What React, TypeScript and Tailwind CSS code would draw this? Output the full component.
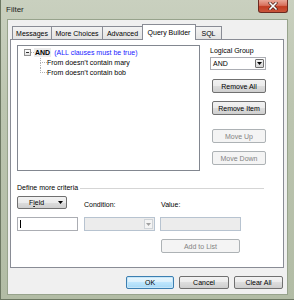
import React from 'react';

const btn =
  'flex items-center justify-center rounded-[2px] border border-[#707070] bg-[linear-gradient(#f2f2f2_0%,#ebebeb_50%,#dddddd_50%,#cfcfcf_100%)] text-[7px] leading-none text-black';
const btnOff =
  'flex items-center justify-center rounded-[2px] border border-[#adb2b5] bg-[#f4f4f4] text-[7px] leading-none text-[#838383]';

const TABS = [
  { label: 'Messages', w: 'w-[39px]' },
  { label: 'More Choices', w: 'w-[51px]' },
  { label: 'Advanced', w: 'w-[40px]' },
];

function CloseButton() {
  return (
    <div className="ml-auto mr-[6px] flex h-[13px] w-[30px] items-center justify-center rounded-b-[3px] border border-t-0 border-[#6b2a20] bg-[linear-gradient(#e9a797_0%,#d8705c_45%,#c23c22_55%,#c9553a_100%)]">
      <svg width="10" height="8" viewBox="0 0 10 8">
        <path d="M2 1 L8 7 M8 1 L2 7" stroke="#4a2018" strokeWidth="3" strokeLinecap="square" />
        <path d="M2 1 L8 7 M8 1 L2 7" stroke="#ffffff" strokeWidth="1.6" strokeLinecap="square" />
      </svg>
    </div>
  );
}

function DownArrow({ color = '#000' }: { color?: string }) {
  return (
    <svg width="5" height="3" viewBox="0 0 5 3">
      <path d="M0 0 L5 0 L2.5 3 Z" fill={color} />
    </svg>
  );
}

function Tree() {
  return (
    <div className="h-[126px] w-[183px] border border-[#828790] bg-white pt-[1px] text-[7px]">
      <div className="flex h-[11px] items-center pl-[6px]">
        <div className="flex h-[7px] w-[7px] items-center justify-center border border-[#919191] bg-[linear-gradient(#ffffff,#e3e3e3)]">
          <div className="h-px w-[3px] bg-[#333]" />
        </div>
        <div className="w-[3px] border-t border-dotted border-[#b0b0b0]" />
        <span className="bg-[#ececec] px-px font-bold leading-[9px]">AND</span>
        <span className="ml-[3px] leading-[9px] text-[#1a1aff]">(ALL clauses must be true)</span>
      </div>
      {['From doesn\u2019t contain mary', 'From doesn\u2019t contain bob'].map((t, i) => (
        <div key={t} className="flex h-[10px] pl-[22px]">
          <div className="flex w-[7px] flex-col">
            <div className="h-1/2 border-b border-l border-dotted border-[#b0b0b0]" />
            <div className={i === 0 ? 'h-1/2 border-l border-dotted border-[#b0b0b0]' : 'h-1/2'} />
          </div>
          <span className="leading-[10px]">{t}</span>
        </div>
      ))}
    </div>
  );
}

export default function App() {
  return (
    <div className="flex h-[300px] w-[294px] flex-col overflow-hidden border-b border-l border-[#6d7863] bg-[linear-gradient(180deg,#c9d0bf_0%,#bcc5b0_35%,#b2bca5_100%)] font-['Liberation_Sans',Arial,sans-serif] text-black">
      <div className="flex h-[19px] shrink-0">
        <span className="pl-[5px] pt-[6px] text-[8px] leading-[8px] text-[#1e1e1e]">Filter</span>
        <CloseButton />
      </div>

      <div className="ml-[6px] mr-[6px] flex h-[276px] flex-col border border-[#97a38c] bg-[#f0f0f0]">
        <div className="mt-[4px] flex h-[15px] items-end pl-[4px]">
          {TABS.map((t) => (
            <div
              key={t.label}
              className={`${t.w} flex h-[13px] items-center justify-center border-l border-t border-[#898c95] bg-[linear-gradient(#f3f3f3,#e3e3e3)] text-[7px] leading-none`}
            >
              {t.label}
            </div>
          ))}
          <div className="relative z-10 mb-[-1px] flex h-[16px] w-[54px] items-center justify-center border border-b-0 border-[#898c95] bg-white pb-[1px] text-[7px] leading-none">
            Query Builder
          </div>
          <div className="flex h-[13px] w-[26px] items-center justify-center border-r border-t border-[#898c95] bg-[linear-gradient(#f3f3f3,#e3e3e3)] text-[7px] leading-none">
            SQL
          </div>
        </div>

        <div className="ml-[2px] flex h-[229px] w-[274px] flex-col border border-[#898c95] bg-white">
          <div className="flex pl-[6px] pt-[5px]">
            <Tree />
            <div className="ml-[10px] flex w-[56px] flex-col">
              <span className="mt-[1px] h-[9px] text-[7px] leading-[9px]">Logical Group</span>
              <div className="mt-[2px] flex h-[13px] items-center border border-[#abadb3] bg-white">
                <span className="flex-1 pl-[2px] text-[7px] leading-none">AND</span>
                <div className="mr-px flex h-[9px] w-[9px] items-center justify-center rounded-[1px] border border-[#707070] bg-[linear-gradient(#f2f2f2,#d6d6d6)]">
                  <DownArrow />
                </div>
              </div>
              <div className={`${btn} ml-[2px] mt-[9px] h-[14px] w-[54px]`}>Remove All</div>
              <div className={`${btn} ml-[2px] mt-[8px] h-[14px] w-[54px]`}>Remove Item</div>
              <div className={`${btnOff} ml-[2px] mt-[14px] h-[14px] w-[54px]`}>Move Up</div>
              <div className={`${btnOff} ml-[2px] mt-[8px] h-[14px] w-[54px]`}>Move Down</div>
            </div>
          </div>

          <div className="ml-[6px] mt-[13px] flex h-[8px] items-center">
            <span className="text-[7px] leading-[8px]">Define more criteria</span>
            <div className="ml-[2px] mr-[19px] flex-1 border-t border-[#d5d5d5]" />
          </div>

          <div className="ml-[6px] mt-[4px] grid grid-cols-[62px_71px_81px] gap-x-[5px]">
            <div className="flex h-[13px] w-[50px] items-center rounded-[2px] border border-[#707070] bg-[linear-gradient(#f2f2f2_0%,#ebebeb_50%,#dddddd_50%,#cfcfcf_100%)] pl-[11px] pr-[3px] text-[7px] leading-none">
              <span>
                F<span className="underline">i</span>eld
              </span>
              <div className="ml-auto flex">
                <DownArrow />
              </div>
            </div>
            <span className="h-[9px] self-end text-[7px] leading-[9px]">Condition:</span>
            <span className="h-[9px] self-end pl-px text-[7px] leading-[9px]">Value:</span>

            <div className="mt-[8px] flex h-[14px] w-[61px] items-center border border-[#abadb3] bg-white pl-[2px]">
              <div className="h-[8px] w-px bg-black" />
            </div>
            <div className="mt-[8px] flex h-[14px] items-center justify-end border border-[#b7c3d0] bg-[#ececec] pr-px">
              <div className="flex h-[10px] w-[9px] items-center justify-center border border-[#d0d4d8] bg-[#f4f4f4]">
                <DownArrow color="#a0a0a0" />
              </div>
            </div>
            <div className="mt-[8px] h-[14px] border border-[#b7c3d0] bg-[#ececec]" />

            <div />
            <div />
            <div className={`${btnOff} ml-px mt-[8px] h-[14px] w-[79px]`}>Add to List</div>
          </div>
        </div>

        <div className="mr-[4px] mt-[8px] flex justify-end gap-x-[5px]">
          <div className="flex h-[13px] w-[48px] items-center justify-center rounded-[2px] border border-[#3c7fb1] bg-[linear-gradient(#eaf6fd_0%,#d9f0fc_50%,#bee6fd_50%,#a7d9f5_100%)] text-[7px] leading-none shadow-[inset_0_0_0_1px_#c7e6f8]">
            OK
          </div>
          <div className={`${btn} h-[13px] w-[50px]`}>Cancel</div>
          <div className={`${btn} h-[13px] w-[49px]`}>Clear All</div>
        </div>
      </div>
    </div>
  );
}
